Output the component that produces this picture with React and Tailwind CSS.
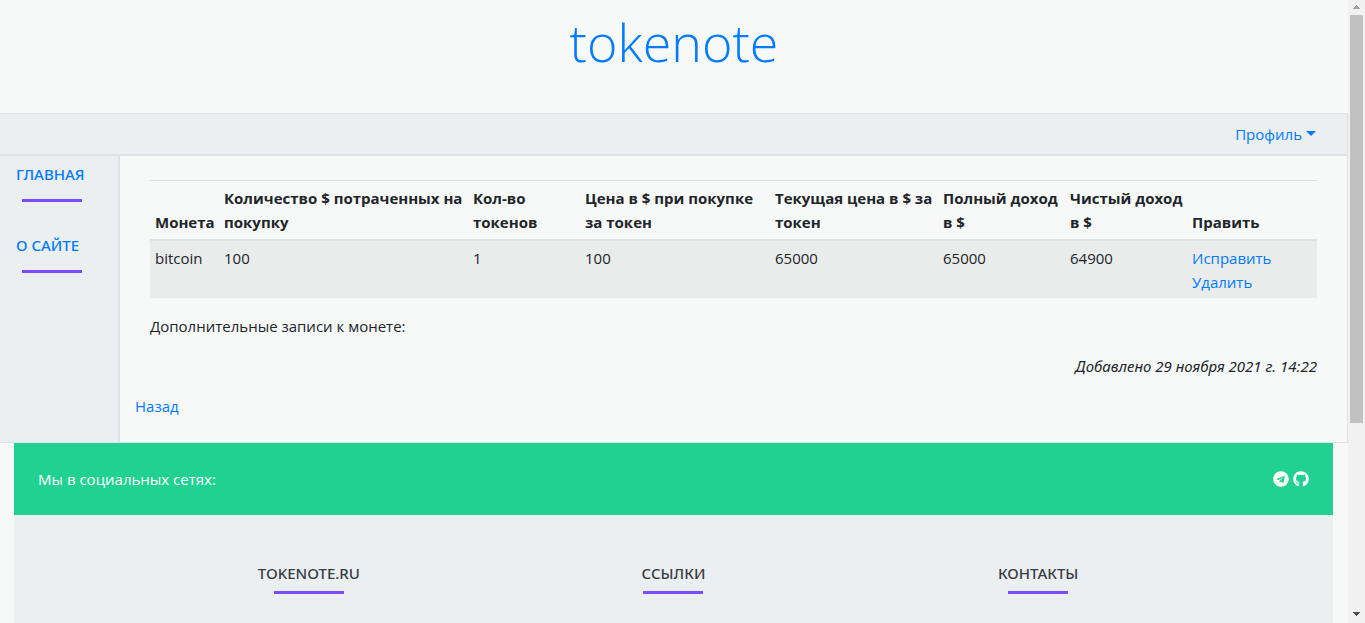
import React from "react";
import { FaTelegram, FaGithub } from "react-icons/fa";

const columns = [
  { title: "Монета", width: "w-[69px]" },
  { title: "Количество $ потраченных на покупку", width: "w-[249px]" },
  { title: "Кол-во токенов", width: "w-[112px]" },
  { title: "Цена в $ при покупке за токен", width: "w-[190px]" },
  { title: "Текущая цена в $ за токен", width: "w-[168px]" },
  { title: "Полный доход в $", width: "w-[127px]" },
  { title: "Чистый доход в $", width: "w-[122px]" },
  { title: "Править", width: "w-[130px]" },
];

const values = ["bitcoin", "100", "1", "100", "65000", "65000", "64900"];

const footerSections = [
  { title: "TOKENOTE.RU", rule: "w-[70px]" },
  { title: "ССЫЛКИ", rule: "w-[60px]" },
  { title: "КОНТАКТЫ", rule: "w-[60px]" },
];

function Rule({ width }) {
  return <div className={`h-[3px] bg-[#7c4dff] ${width}`} />;
}

function SideLink({ children }) {
  return (
    <li className="pl-4">
      <a href="#" className="block font-['Noto_Sans',sans-serif] font-medium leading-6 text-[#007bff]">
        {children}
      </a>
      <div className="pl-1.5 pt-[13px]">
        <Rule width="w-[60px]" />
      </div>
    </li>
  );
}

function CoinTable() {
  return (
    <table className="w-full table-fixed border-separate border-spacing-0 text-left">
      <thead>
        <tr>
          {columns.map((c) => (
            <th
              key={c.title}
              scope="col"
              className={`border-t border-b-2 border-t-[#dee2e6] border-b-[#dee2e6] py-[5px] pl-[5px] align-bottom font-bold ${c.width}`}
            >
              {c.title}
            </th>
          ))}
        </tr>
      </thead>
      <tbody className="bg-[#eaebeb]">
        <tr>
          {values.map((v, i) => (
            <td key={i} className="px-[5px] pt-[5px] pb-1 align-top">
              {v}
            </td>
          ))}
          <td className="px-[5px] pt-[5px] pb-1 align-top text-[#007bff]">
            <a href="#" className="block">Исправить</a>
            <a href="#" className="block">Удалить</a>
          </td>
        </tr>
      </tbody>
    </table>
  );
}

function ScrollBar() {
  return (
    <div aria-hidden="true" className="fixed inset-y-0 right-0 flex w-[17px] flex-col items-center bg-[#f1f1f1]">
      <svg className="h-[15px] w-[17px] shrink-0" viewBox="0 0 17 15" shapeRendering="crispEdges">
        <path d="M8 5h1v1h1v1h1v1h1v1H5V8h1V7h1V6h1z" fill="#a3a3a3" />
      </svg>
      <div className="h-[408px] w-[13px] bg-[#c1c1c1]" />
      <svg className="mt-auto h-[17px] w-[17px] shrink-0" viewBox="0 0 17 17" shapeRendering="crispEdges">
        <path d="M5 6h7v1h-1v1h-1v1H9v1H8V9H7V8H6V7H5z" fill="#505050" />
      </svg>
    </div>
  );
}

export default function App() {
  return (
    <div className="flex min-h-screen flex-col bg-[#f7f9f9] pr-[17px] font-['Open_Sans','Noto_Sans',sans-serif] text-[15px] leading-6 text-[#212529]">
      <header className="h-[113px] pt-2 text-center">
        <h1 className="text-[52px] font-light leading-[67px]">
          <a href="#" className="text-[#007bff]">tokenote</a>
        </h1>
      </header>

      <div className="border-y border-r border-[#dee2e6]">
        <nav className="flex justify-end border-b-2 border-[#dee2e6] bg-[#eceff1] py-2 pr-[31px]">
          <button type="button" className="flex items-center gap-1 text-[#007bff]">
            Профиль
            <svg className="mb-0.5 h-[5px] w-[10px]" viewBox="0 0 10 5" fill="currentColor">
              <path d="M0 0h10L5 5z" />
            </svg>
          </button>
        </nav>
        <div className="flex">
          <aside className="w-[120px] shrink-0 border-r-2 border-[#dee2e6] bg-[#eceff1]">
            <ul className="flex flex-col gap-[31px] pt-1.5">
              <SideLink>ГЛАВНАЯ</SideLink>
              <SideLink>О САЙТЕ</SideLink>
            </ul>
          </aside>
          <main className="min-w-0 flex-1 px-[15px] pt-6 pb-6">
            <article className="px-[15px]">
              <CoinTable />
              <p className="mt-4">Дополнительные записи к монете:</p>
              <p className="mt-4 text-right font-['Noto_Sans',sans-serif] italic">Добавлено 29 ноября 2021 г. 14:22</p>
            </article>
            <a href="#" className="mt-4 inline-block text-[#007bff]">Назад</a>
          </main>
        </div>
      </div>

      <footer className="mr-[15px] ml-[14px] flex grow flex-col bg-[#eceff1]">
        <section className="flex items-center justify-between bg-[#21d192] p-6 text-white">
          <span>Мы в социальных сетях:</span>
          <div className="flex gap-1">
            <a href="#" aria-label="Telegram"><FaTelegram size={16} /></a>
            <a href="#" aria-label="GitHub"><FaGithub size={16} /></a>
          </div>
        </section>
        <section className="mx-auto grid w-full max-w-[1094px] grid-cols-3 pt-[46px] pb-6">
          {footerSections.map((s) => (
            <div key={s.title} className="flex flex-col items-center gap-[6px]">
              <h2 className="font-['Noto_Sans',sans-serif] font-medium text-[#373d43]">{s.title}</h2>
              <Rule width={s.rule} />
            </div>
          ))}
        </section>
      </footer>

      <ScrollBar />
    </div>
  );
}
